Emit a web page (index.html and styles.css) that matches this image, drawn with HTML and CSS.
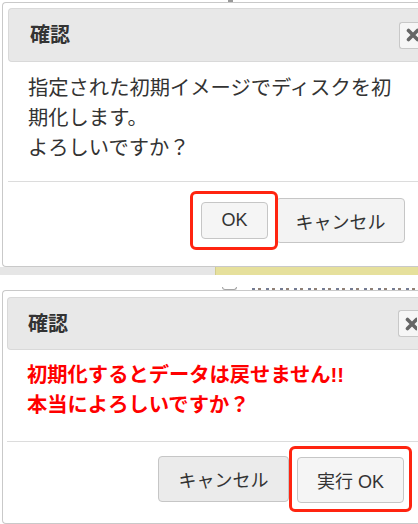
FILE: index.html
```html
<!DOCTYPE html>
<html lang="ja">
<head>
<meta charset="utf-8">
<title>確認</title>
<link rel="stylesheet" href="styles.css">
</head>
<body>
<div class="topline"><span class="topmark"></span></div>

<section class="dialog dialog-first">
  <header class="dlg-head">
    <h2 class="dlg-title">確認</h2>
    <button class="dlg-close" aria-label="閉じる">
      <svg width="12" height="14" viewBox="0 0 12 14"><path d="M2.5 2.5 L11.5 11.5 M11.5 2.5 L2.5 11.5" stroke="#666" stroke-width="3.6" stroke-linecap="round" fill="none"/></svg>
    </button>
  </header>
  <div class="dlg-body">指定された初期イメージでディスクを初<br>期化します。<br>よろしいですか？</div>
  <footer class="dlg-foot">
    <div class="hl hl-first"><button class="btn btn-ok">OK</button></div>
    <button class="btn btn-cancel-first">キャンセル</button>
  </footer>
</section>

<div class="strip"><div class="strip-gray"></div><div class="strip-yellow"></div></div>
<div class="frag-row"><span class="frag-arc"></span><span class="frag-dots"></span></div>

<section class="dialog dialog-second">
  <header class="dlg-head">
    <h2 class="dlg-title">確認</h2>
    <button class="dlg-close" aria-label="閉じる">
      <svg width="12" height="14" viewBox="0 0 12 14"><path d="M2.5 2.5 L11.5 11.5 M11.5 2.5 L2.5 11.5" stroke="#666" stroke-width="3.6" stroke-linecap="round" fill="none"/></svg>
    </button>
  </header>
  <div class="dlg-body warn">初期化するとデータは戻せません!!<br>本当によろしいですか？</div>
  <footer class="dlg-foot">
    <button class="btn btn-cancel-second">キャンセル</button>
    <div class="hl hl-second"><button class="btn btn-exec">実行 OK</button></div>
  </footer>
</section>
</body>
</html>
```
FILE: styles.css
```css
* { box-sizing: border-box; }
html, body { margin: 0; padding: 0; }
body {
  width: 418px;
  height: 524px;
  overflow: hidden;
  background: #fff;
  font-family: "Liberation Sans", "Noto Sans CJK JP", sans-serif;
  color: #333;
}

.topline { height: 2px; display: flex; }
.topmark { margin-left: 228px; width: 5px; height: 2px; background: #9a9a9a; }

/* dialogs run off the right edge of the captured region: no right border/padding visible */
.dialog {
  width: 416px;
  margin-left: 2px;
  border: 1px solid #c9c9c9;
  border-right: none;
  border-radius: 4px 0 0 4px;
  background: #fff;
  padding: 5px 0 5px 5px;
}
.dialog-second { padding: 6px 0 5px 4px; }

.dlg-head {
  height: 54px;
  display: flex;
  align-items: center;
  background: #e8e8e8;
  border: 1px solid #d9d9d9;
  border-right: none;
  border-radius: 4px 0 0 4px;
  padding: 0 0 0 21px;
}
.dialog-second .dlg-head { height: 53px; padding-left: 20px; }

.dlg-title {
  margin: 0;
  flex: 1;
  font-size: 20px;
  font-weight: bold;
  line-height: 1;
  color: #333;
}

.dlg-close {
  width: 19px;
  height: 27px;
  padding: 0 0 0 6px;
  display: flex;
  align-items: center;
  overflow: hidden;
  background: #f6f6f6;
  border: 1px solid #c8c8c8;
  border-right: none;
  border-radius: 3px 0 0 3px;
}
.dialog-second .dlg-close { width: 20px; }

.dlg-body {
  padding: 11px 20px 18px 20px;
  font-size: 20.3px;
  line-height: 30px;
  color: #333;
}
.dialog-second .dlg-body { padding: 10px 20px 21px 20px; }
.warn { color: #ff0000; font-weight: bold; }

.dlg-foot {
  height: 80px;
  border-top: 1px solid #dcdcdc;
  display: flex;
  justify-content: flex-end;
  align-items: center;
  padding: 0 13px 2px 0;
}
.dialog-second .dlg-foot { height: 77px; padding: 0 6px 3px 0; }

.hl {
  position: relative;
  z-index: 1;
  border: 3px solid #ff2410;
  border-radius: 6px;
}
.hl-first { padding: 8px 7px 8px 8px; }
.hl-second { padding: 8px 5px 6px 5px; }

.btn {
  display: flex;
  align-items: center;
  justify-content: center;
  padding: 0;
  font-family: "Liberation Sans", "Noto Sans CJK JP", sans-serif;
  font-size: 18px;
  color: #333;
  background: #f5f5f5;
  border: 1px solid #c6c6c6;
  border-radius: 4px;
}
.btn-ok { width: 67px; height: 37px; }
.btn-cancel-first { width: 129px; height: 45px; margin-left: -2px; background: #f3f3f3; }
.btn-cancel-second { width: 131px; height: 46px; background: #ebebeb; }
.btn-exec { width: 107px; height: 46px; }

.strip { height: 8px; display: flex; }
.strip-gray { width: 215px; background: #e6e6e6; }
.strip-yellow { flex: 1; background: #e6e09c; border-left: 1px solid #d2cd8c; }

.frag-row {
  height: 3px;
  margin-top: 12px;
  display: flex;
  align-items: flex-end;
}
.frag-arc {
  margin-left: 222px;
  width: 15px;
  height: 3px;
  border: 1px solid #a5a5a5;
  border-top: none;
  border-radius: 0 0 7px 7px;
}
.frag-dots {
  flex: 1;
  margin-left: 15px;
  height: 2px;
  opacity: 0.75;
  background: repeating-linear-gradient(90deg, #46506e 0 3px, transparent 3px 6px, #6a5648 6px 9px, transparent 9px 14px);
}
```
